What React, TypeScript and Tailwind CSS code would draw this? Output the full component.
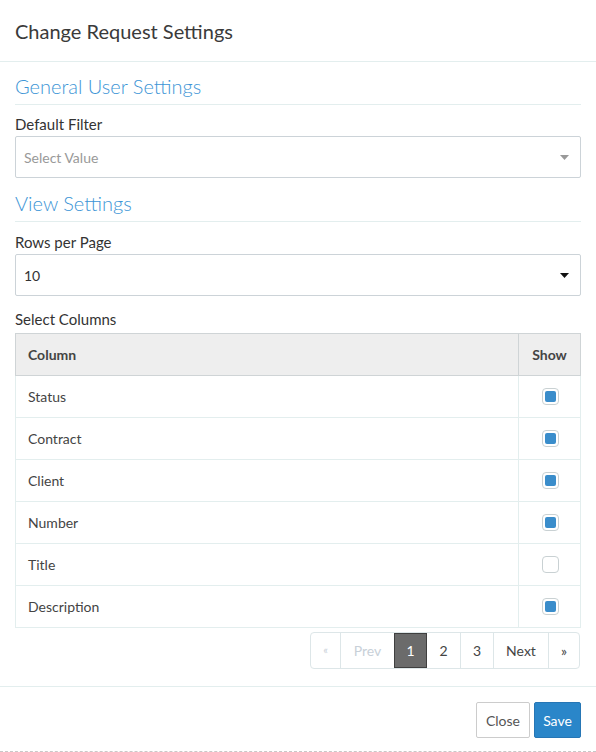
import React from 'react';

const columns = [
  { name: 'Status', show: true },
  { name: 'Contract', show: true },
  { name: 'Client', show: true },
  { name: 'Number', show: true },
  { name: 'Title', show: false },
  { name: 'Description', show: true },
];

const Caret = ({ color }: { color: string }) => (
  <svg width="9" height="5" viewBox="0 0 9 5" className="shrink-0">
    <path d="M0 0h9L4.5 5z" fill={color} />
  </svg>
);

const Checkbox = ({ checked }: { checked: boolean }) => (
  <span className="w-[17px] h-[17px] rounded-[4px] border border-[#c9d1d3] bg-white flex items-center justify-center">
    {checked && <span className="w-[11px] h-[11px] rounded-[2px] bg-[#3a8dcb]" />}
  </span>
);

const SectionTitle = ({ children }: { children: React.ReactNode }) => (
  <div className="border-b border-[#e3eeee] pb-[6px]">
    <h3 className="text-[20px] leading-[24px] font-light text-[#3d95d6]">{children}</h3>
  </div>
);

const Pager = () => {
  const cell = 'h-[35px] flex items-center justify-center border-l border-[#dde6e8] text-[14px]';
  return (
    <div className="flex border border-[#dde6e8] rounded-[4px] overflow-hidden">
      <span className="h-[35px] w-[29px] flex items-center justify-center text-[11px] text-[#c8d0d8]">«</span>
      <span className={`${cell} w-[54px] text-[#c8d0d8] border-[#b8c8d0]`}>Prev</span>
      <span className="h-[35px] w-[33px] flex items-center justify-center bg-[#6b6b6b] border border-[#3f3f3f] text-white text-[14px]">1</span>
      <span className="h-[35px] w-[33px] flex items-center justify-center text-[14px] text-[#444]">2</span>
      <span className={`${cell} w-[33px] text-[#444]`}>3</span>
      <span className={`${cell} w-[55px] text-[#444]`}>Next</span>
      <span className={`${cell} w-[31px] text-[11px] text-[#444]`}>»</span>
    </div>
  );
};

export default function App() {
  return (
    <div className="w-[596px] h-[752px] bg-white relative font-['Lato','Noto_Sans',sans-serif] text-[#333]">
      <div className="h-[62px] border-b border-[#e3eeee] px-[15px] flex items-center">
        <h2 className="text-[20px] text-[#3a3a3a]">Change Request Settings</h2>
      </div>

      <div className="px-[15px] pt-[12px]">
        <SectionTitle>General User Settings</SectionTitle>
        <div className="text-[15px] leading-[20px] mt-[9px]">Default Filter</div>
        <div className="mt-[2px] h-[42px] border border-[#ccd3d8] rounded-[2px] flex items-center justify-between pl-[8px] pr-[11px]">
          <span className="text-[14px] text-[#999]">Select Value</span>
          <Caret color="#999" />
        </div>

        <div className="mt-[13px]">
          <SectionTitle>View Settings</SectionTitle>
        </div>
        <div className="text-[15px] leading-[20px] mt-[10px]">Rows per Page</div>
        <div className="mt-[2px] h-[42px] border border-[#ccd3d8] rounded-[2px] flex items-center justify-between pl-[8px] pr-[11px]">
          <span className="text-[14px] text-[#333]">10</span>
          <Caret color="#111" />
        </div>

        <div className="text-[15px] leading-[20px] mt-[13px]">Select Columns</div>
        <table className="mt-[4px] w-full border-collapse text-[14px]">
          <thead>
            <tr className="bg-[#eeeeee] h-[42px]">
              <th className="border border-[#cfd4d6] text-left font-bold pl-[12px] text-[#444]">Column</th>
              <th className="border border-[#cfd4d6] w-[62px] font-bold text-center text-[#444]">Show</th>
            </tr>
          </thead>
          <tbody>
            {columns.map((c) => (
              <tr key={c.name} className="h-[42px]">
                <td className="border border-[#e3eeee] pl-[12px] text-[#444]">{c.name}</td>
                <td className="border border-[#e3eeee] border-l-0">
                  <div className="flex justify-center pl-[1px]">
                    <Checkbox checked={c.show} />
                  </div>
                </td>
              </tr>
            ))}
          </tbody>
        </table>

        <div className="flex justify-end mt-[4px] pr-[1px]">
          <Pager />
        </div>
      </div>

      <div className="mt-[17px] border-t border-[#e3eeee] px-[15px] pt-[15px] flex justify-end gap-[4px]">
        <button className="h-[36px] w-[54px] border border-[#ccc] rounded-[2px] bg-white text-[14px] text-[#555]">Close</button>
        <button className="h-[36px] w-[47px] border border-[#2676b5] rounded-[2px] bg-[#2a86c9] text-[14px] text-white">Save</button>
      </div>

      <div className="absolute left-0 right-0 bottom-0 border-b border-dashed border-[#c8c8c8]" />
    </div>
  );
}
